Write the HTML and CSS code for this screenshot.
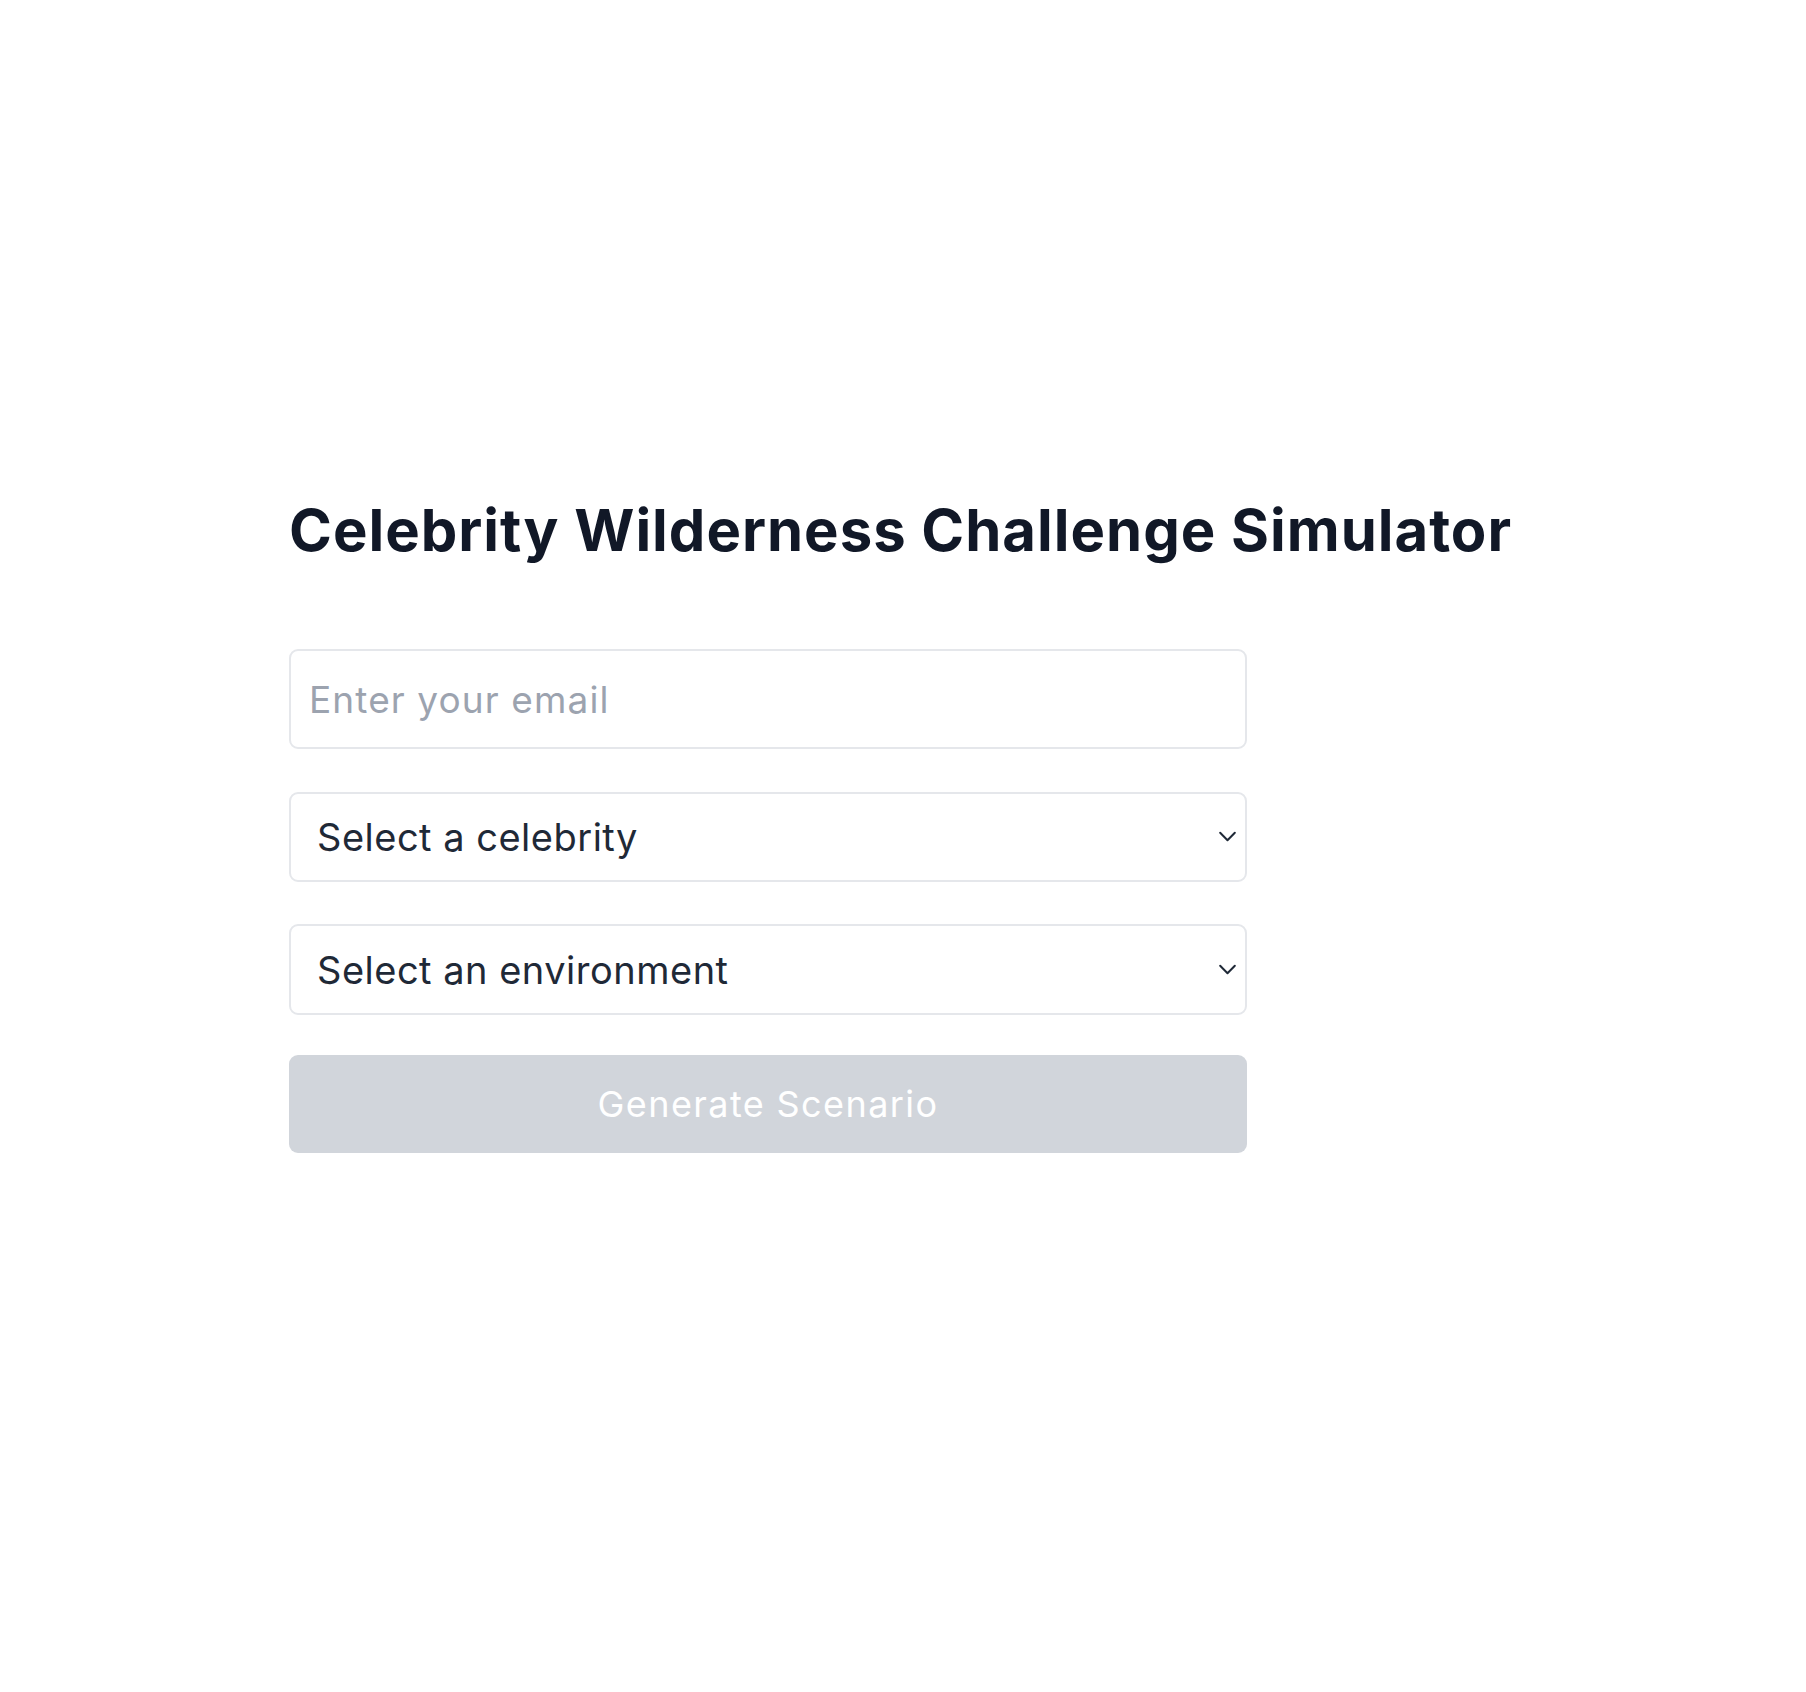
FILE: index.html
```html
<!DOCTYPE html>
<html lang="en">
<head>
<meta charset="utf-8">
<title>Celebrity Wilderness Challenge Simulator</title>
<link rel="stylesheet" href="styles.css">
</head>
<body>
<main class="page">
  <h1 class="title">Celebrity Wilderness Challenge Simulator</h1>
  <form class="form">
    <input class="field field-input" type="email" placeholder="Enter your email">
    <div class="select-wrap">
      <select class="field field-select">
        <option>Select a celebrity</option>
      </select>
      <svg class="chevron" viewBox="0 0 20 12" aria-hidden="true"><path d="M2 2 L10 10 L18 2" fill="none" stroke="#1f2937" stroke-width="2.2" stroke-linecap="round" stroke-linejoin="round"/></svg>
    </div>
    <div class="select-wrap select-wrap-2">
      <select class="field field-select">
        <option>Select an environment</option>
      </select>
      <svg class="chevron" viewBox="0 0 20 12" aria-hidden="true"><path d="M2 2 L10 10 L18 2" fill="none" stroke="#1f2937" stroke-width="2.2" stroke-linecap="round" stroke-linejoin="round"/></svg>
    </div>
    <button class="submit" type="button" disabled>Generate Scenario</button>
  </form>
</main>
</body>
</html>
```
FILE: styles.css
```css
* { box-sizing: border-box; }
html, body { margin: 0; padding: 0; background: #ffffff; }
body { font-family: Inter, "Noto Sans", "Liberation Sans", sans-serif; color: #111827; }

.page {
  width: 1228px;
  margin: 0 auto;
  padding-top: 496px;
}

.title {
  margin: 0;
  font-size: 58px;
  line-height: 68px;
  font-weight: 700;
  color: #111827;
  letter-spacing: 1px;
}

.form {
  margin-top: 85px;
  width: 958px;
  display: flex;
  flex-direction: column;
}

.field {
  display: block;
  width: 100%;
  font-family: inherit;
  border: 2px solid #e5e7eb;
  border-radius: 9px;
  background: #ffffff;
  outline: none;
}

.field-input {
  height: 100px;
  padding: 0 18px;
  font-size: 37px;
  letter-spacing: 1.1px;
  color: #111827;
}
.field-input::placeholder { color: #9ca3af; opacity: 1; }

.select-wrap {
  position: relative;
  margin-top: 43px;
}
.select-wrap-2 { margin-top: 42px; }

.field-select {
  -webkit-appearance: none;
  appearance: none;
  height: 90px;
  padding: 0 60px 0 26px;
  font-size: 38px;
  letter-spacing: 0.5px;
  color: #1f2937;
}
.select-wrap-2 .field-select { height: 91px; }

.chevron {
  position: absolute;
  right: 10px;
  top: 50%;
  width: 19px;
  height: 11px;
  margin-top: -6px;
  pointer-events: none;
}

.submit {
  margin-top: 40px;
  height: 98px;
  width: 100%;
  border: none;
  border-radius: 9px;
  background: #d1d5db;
  color: #ffffff;
  font-family: inherit;
  font-size: 36px;
  letter-spacing: 1.4px;
  cursor: not-allowed;
}
```
